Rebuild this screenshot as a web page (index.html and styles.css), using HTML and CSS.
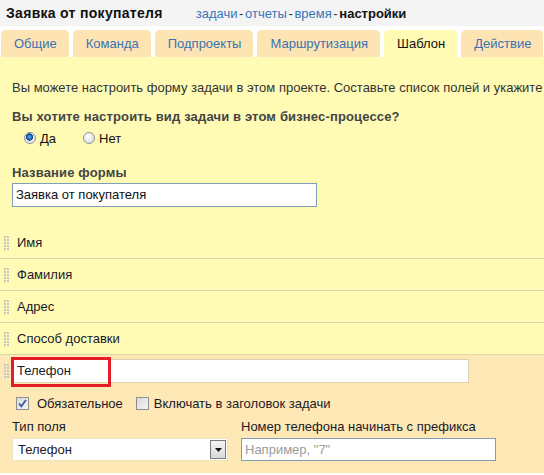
FILE: index.html
```html
<!DOCTYPE html>
<html lang="ru">
<head>
<meta charset="utf-8">
<title>Заявка от покупателя</title>
<link rel="stylesheet" href="styles.css">
</head>
<body>
<div class="header">
  <span class="title">Заявка от покупателя</span>
  <nav class="nav"><a href="#">задачи</a> - <a href="#">отчеты</a> - <a href="#">время</a> - <b>настройки</b></nav>
</div>
<div class="tabs">
  <div class="tab">Общие</div>
  <div class="tab">Команда</div>
  <div class="tab">Подпроекты</div>
  <div class="tab">Маршрутизация</div>
  <div class="tab active">Шаблон</div>
  <div class="tab">Действие</div>
</div>
<div class="panel">
  <p class="intro">Вы можете настроить форму задачи в этом проекте. Составьте список полей и укажите их свойства.</p>
  <p class="question">Вы хотите настроить вид задачи в этом бизнес-процессе?</p>
  <div class="radios">
    <label class="radio"><span class="rb on"></span>Да</label>
    <label class="radio"><span class="rb"></span>Нет</label>
  </div>
  <div class="form-name">
    <div class="label">Название формы</div>
    <div class="name-input">Заявка от покупателя</div>
  </div>
  <ul class="fields">
    <li class="field"><span class="handle"></span>Имя</li>
    <li class="field"><span class="handle"></span>Фамилия</li>
    <li class="field"><span class="handle"></span>Адрес</li>
    <li class="field"><span class="handle"></span>Способ доставки</li>
  </ul>
  <div class="field-edit">
    <div class="edit-top">
      <span class="handle"></span>
      <div class="phone-input">Телефон</div>
    </div>
    <div class="highlight"></div>
    <div class="checks">
      <label class="check first"><span class="cb on"><svg width="11" height="11" viewBox="0 0 11 11"><path d="M2 5.5 L4.3 8.3 L9 2" fill="none" stroke="#3f57a3" stroke-width="1.8"/></svg></span>Обязательное</label>
      <label class="check second"><span class="cb"></span>Включать в заголовок задачи</label>
    </div>
    <div class="type-row">
      <div class="col col1">
        <div class="flabel">Тип поля</div>
        <div class="select"><span>Телефон</span><span class="arrow"><svg width="7" height="4" viewBox="0 0 7 4"><path d="M0 0 H7 L3.5 4 Z" fill="#111"/></svg></span></div>
      </div>
      <div class="col col2">
        <div class="flabel">Номер телефона начинать с префикса</div>
        <div class="prefix-input">Например, "7"</div>
      </div>
    </div>
  </div>
</div>
</body>
</html>
```

FILE: styles.css
```css
html, body { margin: 0; }
body {
  font: 13px "Liberation Sans", Arial, sans-serif;
  color: #222;
  background: #fff;
  overflow: hidden;
  height: 475px;
}
.header {
  height: 26px;
  background: #f4f4f4;
  display: flex;
  align-items: center;
  padding-left: 6px;
}
.title { font-weight: bold; font-size: 14px; color: #111; letter-spacing: 0.3px; }
.nav { margin-left: 33px; color: #333; word-spacing: -2px; }
.nav a { color: #3a74b8; text-decoration: none; word-spacing: 0; }
.nav b { color: #111; word-spacing: 0; }

.tabs { display: flex; gap: 4px; margin-top: 4px; padding-left: 1px; }
.tab {
  height: 27px;
  line-height: 27px;
  padding: 0 12px 0 13px;
  background: #fde4b2;
  border-radius: 5px 5px 0 0;
  color: #3a72b6;
  white-space: nowrap;
}
.tab.active { background: #fffbb5; color: #111; }

.panel { background: #fffbb5; }
.intro {
  margin: 0;
  padding: 23px 0 0 12px;
  white-space: nowrap;
  line-height: 16px;
  color: #333;
}
.question {
  margin: 13px 0 0 12px;
  font-weight: bold;
  color: #444;
  line-height: 16px;
  letter-spacing: 0.15px;
}
.radios {
  display: flex;
  align-items: center;
  margin-top: 5px;
  padding-left: 24px;
  height: 16px;
}
.radio { display: flex; align-items: center; gap: 4px; margin-right: 27px; color: #111; }
.rb {
  width: 12px;
  height: 12px;
  box-sizing: border-box;
  border-radius: 50%;
  border: 1px solid #8c9298;
  background: radial-gradient(circle at 40% 35%, #fff 0, #e6e6e6 60%, #cfcfcf 100%);
}
.rb.on {
  background: radial-gradient(circle at 45% 40%, #6fb0e8 0, #1a64ad 2.5px, #0e3f7a 3.5px, #f2f2f2 3.8px, #d8d8d8 100%);
}

.form-name { margin-top: 19px; padding-left: 12px; }
.label { font-weight: bold; color: #444; line-height: 16px; letter-spacing: 0.15px; }
.name-input {
  margin-top: 2px;
  width: 305px;
  height: 24px;
  box-sizing: border-box;
  border: 1px solid #7f9db9;
  background: #fff;
  line-height: 22px;
  padding-left: 3px;
  color: #111;
}

.fields { list-style: none; margin: 20px 0 0; padding: 0; }
.field {
  height: 31px;
  border-bottom: 1px solid #ddd6a8;
  display: flex;
  align-items: center;
  gap: 8px;
  padding-left: 4px;
  color: #1a1a2a;
}
.handle {
  flex: none;
  width: 5px;
  height: 14px;
  background: conic-gradient(from 270deg at 2px 2px, #c6c6c6 25%, transparent 0) 0 0 / 3px 3px;
}

.field-edit {
  position: relative;
  background: #fee8b5;
  padding: 4px 0 12px;
}
.edit-top { display: flex; align-items: center; gap: 3px; padding-left: 4px; }
.phone-input {
  width: 457px;
  height: 24px;
  box-sizing: border-box;
  border: 1px solid #ddd3ae;
  background: #fff;
  line-height: 22px;
  padding-left: 4px;
  color: #1a1a2a;
}
.highlight {
  position: absolute;
  left: 11px;
  top: 2px;
  width: 100px;
  height: 30px;
  box-sizing: border-box;
  border: 3px solid #e41e26;
}
.checks {
  display: flex;
  align-items: center;
  margin-top: 11px;
  padding-left: 16px;
  height: 18px;
}
.check { display: flex; align-items: center; color: #1a1a2a; }
.check.first { gap: 8px; margin-right: 13px; }
.check.second { gap: 5px; }
.cb {
  width: 13px;
  height: 13px;
  box-sizing: border-box;
  border: 1px solid #8e8f8f;
  background: linear-gradient(135deg, #d8d8d8, #f7f7f7);
  display: flex;
  align-items: center;
  justify-content: center;
}
.cb svg { display: block; }

.type-row { display: flex; gap: 13px; margin-top: 7px; padding-left: 12px; }
.col1 { width: 216px; }
.col2 { width: 255px; }
.flabel { line-height: 16px; color: #1a1a2a; white-space: nowrap; }
.select {
  margin-top: 3px;
  height: 23px;
  box-sizing: border-box;
  background: #fff;
  border: 1px solid #efe3bd;
  display: flex;
  align-items: center;
  justify-content: space-between;
  padding-left: 5px;
  padding-right: 1px;
  color: #1a1a2a;
}
.arrow {
  width: 16px;
  height: 19px;
  box-sizing: border-box;
  border: 1px solid #7b7b7b;
  background: linear-gradient(#f4f4f4, #d9d9d9);
  display: flex;
  align-items: center;
  justify-content: center;
}
.arrow svg { display: block; }
.prefix-input {
  margin-top: 3px;
  height: 23px;
  box-sizing: border-box;
  border: 1px solid #7f9db9;
  background: #fff;
  color: #9b9b9b;
  line-height: 21px;
  padding-left: 3px;
}
```
